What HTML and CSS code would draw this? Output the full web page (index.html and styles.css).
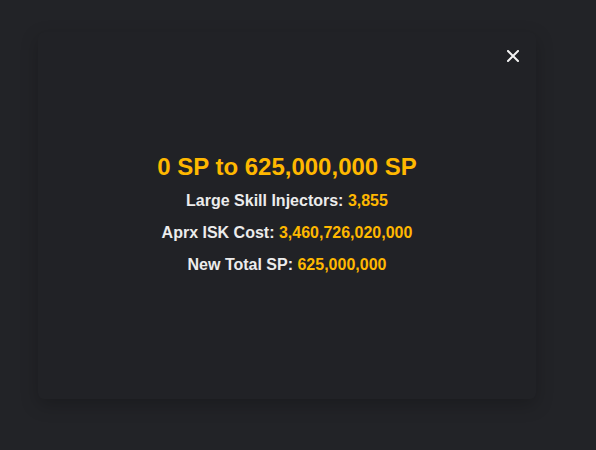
FILE: index.html
```html
<!DOCTYPE html>
<html>
<head>
<meta charset="utf-8">
<link rel="stylesheet" href="styles.css">
</head>
<body>
<div class="modal">
  <button class="close" aria-label="Close">
    <svg width="12" height="12" viewBox="0 0 12 12"><path d="M1 1 L11 11 M11 1 L1 11" stroke="#f2f2f2" stroke-width="2" stroke-linecap="square"/></svg>
  </button>
  <div class="content">
    <h2 class="title">0 SP to 625,000,000 SP</h2>
    <p class="row">Large Skill Injectors: <span class="val">3,855</span></p>
    <p class="row">Aprx ISK Cost: <span class="val">3,460,726,020,000</span></p>
    <p class="row">New Total SP: <span class="val">625,000,000</span></p>
  </div>
</div>
</body>
</html>
```
FILE: styles.css
```css
html, body {
  margin: 0;
  padding: 0;
  background: #222327;
  height: 450px;
  overflow: hidden;
  font-family: "Liberation Sans", Arial, sans-serif;
}
.modal {
  position: relative;
  margin: 32px 0 0 38px;
  width: 498px;
  height: 367px;
  background: #212226;
  border-radius: 6px;
  box-shadow: 0 6px 18px rgba(0, 0, 0, 0.22);
  display: flex;
  align-items: center;
  justify-content: center;
}
.close {
  position: absolute;
  top: 18px;
  right: 17px;
  width: 12px;
  height: 12px;
  padding: 0;
  border: 0;
  background: none;
  display: flex;
}
.content {
  text-align: center;
  margin-top: -4px;
}
.title {
  margin: 0 0 10px;
  font-size: 24px;
  font-weight: bold;
  line-height: 28px;
  color: #ffb800;
}
.row {
  margin: 0 0 13px;
  font-size: 16px;
  font-weight: bold;
  line-height: 19px;
  color: #ececec;
}
.row:last-child { margin-bottom: 0; }
.val { color: #ffb800; }
```
